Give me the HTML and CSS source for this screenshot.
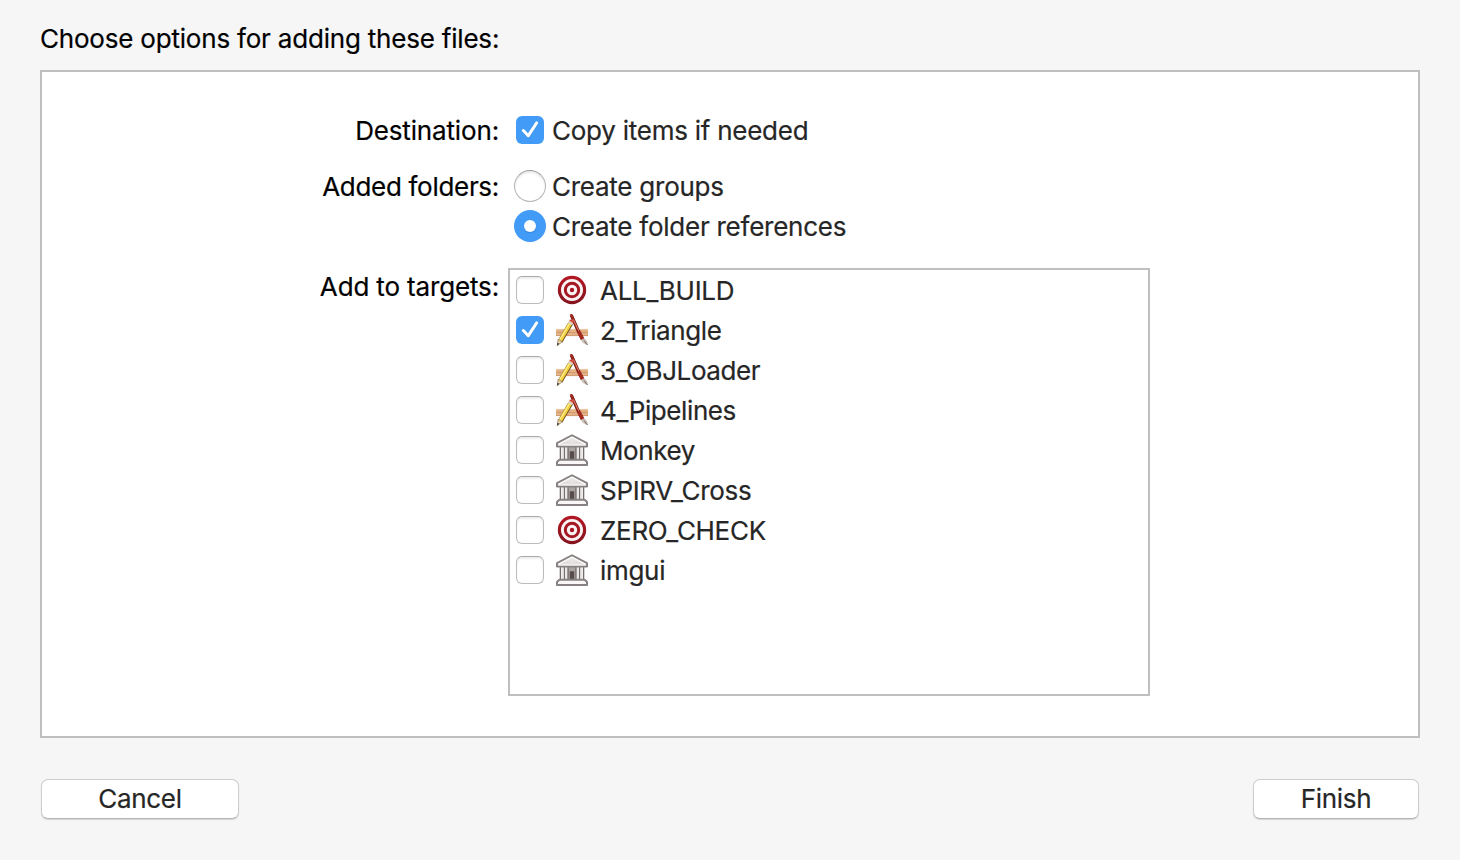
FILE: index.html
```html
<!DOCTYPE html>
<html lang="en">
<head>
<meta charset="utf-8">
<title>Add Files</title>
<link rel="stylesheet" href="styles.css">
</head>
<body>
<svg class="defs" width="0" height="0" aria-hidden="true">
  <defs>
    <linearGradient id="red" x1="0" y1="0" x2="0" y2="1"><stop offset="0" stop-color="#b31824"/><stop offset="1" stop-color="#84131d"/></linearGradient>
    <linearGradient id="stone" x1="0" y1="0" x2="0" y2="1"><stop offset="0" stop-color="#f0eded"/><stop offset="1" stop-color="#dcd8d8"/></linearGradient>
    <symbol id="check" viewBox="0 0 28 28">
      <path d="M7.3 15.3 12.2 20.6 20.7 7.6" fill="none" stroke="#2674c4" stroke-opacity=".45" stroke-width="3" stroke-linecap="round" stroke-linejoin="round"/>
      <path d="M7.3 14.5 12.2 19.8 20.7 6.9" fill="none" stroke="#fff" stroke-width="3" stroke-linecap="round" stroke-linejoin="round"/>
    </symbol>
    <symbol id="bullseye" viewBox="0 0 32 32">
      <circle cx="16" cy="16" r="14.2" fill="url(#red)"/>
      <circle cx="16" cy="16" r="11" fill="#fbf3f3"/>
      <circle cx="16" cy="16" r="8.2" fill="#a31822"/>
      <circle cx="16" cy="16" r="5.2" fill="#fbf3f3"/>
      <circle cx="16" cy="16" r="2.2" fill="#a31822"/>
    </symbol>
    <symbol id="app" viewBox="0 0 32 32">
      <path d="M0 15h32v7H0z" fill="#e3b287"/>
      <path d="M0 15.4h32" stroke="#edc59f"/>
      <path d="M0 18.5h32M0 21.6h32" stroke="#cf9769" stroke-width=".8"/>
      <path d="M15.3 1.2 22 16.5 26.5 25.5" fill="none" stroke="#6d1514" stroke-width="3.2"/>
      <path d="M14.8 0 21.8 16" stroke="#a52b22" stroke-width="2"/>
      <path d="M17.4 5.5 23 17.5" stroke="#e88c79" stroke-width=".9"/>
      <path d="m20.9 18 3.3-1.6 4.2 8.2-3.2 1.7z" fill="#a32b23"/>
      <path d="m24.9 26 3.4-1.7c2.4 2 3.5 4 3.7 6.7-3.2-.5-5.7-2-7.1-5z" fill="#cec3bd"/>
      <path d="M28 26.5 31.5 31" stroke="#776a65"/>
      <path d="M15.5 8 4.2 27.2" stroke="#6f5122" stroke-width="5"/>
      <path d="M15.2 7.8 4.1 26.8" stroke="#f5cf43" stroke-width="3.7"/>
      <path d="M14.5 7.6 3.5 26.2" stroke="#fff08a" stroke-width="1.2"/>
      <path d="m13.2 6.9 4 2.3-1.2 2-4-2.4z" fill="#d8d6d3"/>
      <path d="M13.7 5.8q2.6-1.3 4.1 1.8l-.6 1.5-3.9-2.3z" fill="#d84e43"/>
      <path d="m2 25.2 4.3 2.5-5 4z" fill="#ead3aa" stroke="#786246" stroke-width=".6"/>
      <path d="m1.5 28.7 1.8 1.1-2.3 2z" fill="#333"/>
    </symbol>
    <symbol id="library" viewBox="0 0 32 32">
      <path d="M3.8 12.5h24.4V26H3.8z" fill="#fff"/>
      <path d="M12 12h8v14h-8z" fill="#aaa3a3"/>
      <path d="M13.8 17.3h4.4V26h-4.4z" fill="#564c4c"/>
      <path d="M4.4 12v14M8.4 12v14M12 12v14M20 12v14M23.6 12v14M27.6 12v14" stroke="#756c6c" stroke-width="1.4"/>
      <path d="M6.4 13v13M10.2 13v13M21.8 13v13M25.6 13v13" stroke="#e9e6e6" stroke-width="1.7"/>
      <path d="M16 1.3 31 9.2v3.4H1V9.2z" fill="url(#stone)" stroke="#888181" stroke-width="2" stroke-linejoin="round"/>
      <path d="M16 3 29.5 10.2M16 3 2.5 10.2M2.5 11h27" fill="none" stroke="#fff" stroke-width="1.2"/>
      <path d="M3.3 25.7h25.4L31 28v3H1v-3z" fill="#faf8f8" stroke="#888181" stroke-width="2" stroke-linejoin="round"/>
    </symbol>
  </defs>
</svg>
<main class="dialog">
  <h1 class="title">Choose options for adding these files:</h1>
  <section class="panel">
    <div class="row destination">
      <div class="label wide">Destination:</div>
      <div class="option"><span class="box on"><svg><use href="#check"/></svg></span><span class="text">Copy items if needed</span></div>
    </div>
    <div class="row folders">
      <div class="label">Added folders:</div>
      <div class="choices">
        <div class="option"><span class="radio"></span><span class="text">Create groups</span></div>
        <div class="option"><span class="radio on"></span><span class="text">Create folder references</span></div>
      </div>
    </div>
    <div class="row targets">
      <div class="label wide">Add to targets:</div>
      <div class="list">
        <div class="target"><span class="box"></span><svg class="icon"><use href="#bullseye"/></svg><span class="text">ALL_BUILD</span></div>
        <div class="target"><span class="box on"><svg><use href="#check"/></svg></span><svg class="icon"><use href="#app"/></svg><span class="text tight">2_Triangle</span></div>
        <div class="target"><span class="box"></span><svg class="icon"><use href="#app"/></svg><span class="text tight">3_OBJLoader</span></div>
        <div class="target"><span class="box"></span><svg class="icon"><use href="#app"/></svg><span class="text tight">4_Pipelines</span></div>
        <div class="target"><span class="box"></span><svg class="icon"><use href="#library"/></svg><span class="text tight">Monkey</span></div>
        <div class="target"><span class="box"></span><svg class="icon"><use href="#library"/></svg><span class="text">SPIRV_Cross</span></div>
        <div class="target"><span class="box"></span><svg class="icon"><use href="#bullseye"/></svg><span class="text">ZERO_CHECK</span></div>
        <div class="target"><span class="box"></span><svg class="icon"><use href="#library"/></svg><span class="text">imgui</span></div>
      </div>
    </div>
  </section>
  <footer class="actions">
    <button class="button cancel">Cancel</button>
    <button class="button finish">Finish</button>
  </footer>
</main>
</body>
</html>
```

FILE: styles.css
```css
* { box-sizing: border-box; }
body {
  margin: 0;
  background: #f6f6f6;
  color: #262626;
  font: 26px/40px Inter, sans-serif;
  letter-spacing: -0.25px;
  white-space: nowrap;
  -webkit-text-stroke: 0.2px;
}
.defs { position: absolute; }
.dialog { width: 1460px; height: 860px; padding: 19px 40px 0; }
.title { margin: 0 0 11px; height: 40px; font: inherit; letter-spacing: -0.2px; color: #000; }
.panel {
  height: 668px;
  padding-top: 38px;
  background: #fff;
  border: 2px solid #bfbfbf;
}
.row { display: grid; grid-template-columns: 457px 1fr; }
.label { padding-top: 1px; color: #000; text-align: right; letter-spacing: -0.3px; }
.label.wide { letter-spacing: -0.15px; }
.destination, .folders { column-gap: 15px; }
.destination { height: 40px; margin-bottom: 16px; }
.option { display: grid; grid-template-columns: 32px 1fr; column-gap: 6px; align-items: center; height: 40px; }
.text { padding-top: 2px; line-height: 38px; }
.text.tight { letter-spacing: -0.4px; }
.box {
  display: block;
  width: 28px;
  height: 28px;
  border: 1px solid #bcbcbc;
  border-top-color: #a9a9a9;
  border-radius: 6px;
  background: #fff;
  box-shadow: inset 0 2px 2px #eee;
}
.option .box { justify-self: center; }
.box.on { border: 0; background: #429bf7; box-shadow: none; }
.box svg { display: block; width: 28px; height: 28px; }
.radio {
  width: 32px;
  height: 32px;
  border: 1px solid #b5b5b5;
  border-top-color: #999;
  border-radius: 50%;
  box-shadow: inset 0 2px 2px #e9e9e9;
}
.radio.on {
  display: grid;
  place-items: center;
  border: 0;
  background: #429bf7;
  box-shadow: none;
}
.radio.on::before {
  content: "";
  width: 12px;
  height: 12px;
  border-radius: 50%;
  background: #fff;
  box-shadow: 0 1px 1px #2674c480;
}
.targets { margin-top: 22px; column-gap: 9px; }
.targets .label { padding: 0; line-height: 38px; }
.list { width: 642px; height: 428px; border: 2px solid #bfbfbf; padding-left: 6px; }
.target { display: flex; align-items: center; height: 40px; letter-spacing: -0.3px; }
.icon { width: 32px; height: 32px; margin: 0 12px; }
.actions { display: flex; justify-content: space-between; margin-top: 41px; padding: 0 1px; }
.button {
  height: 40px;
  padding: 0;
  border: 1px solid #cdcdcd;
  border-bottom-color: #b5b5b5;
  border-radius: 7px;
  background: #fff;
  color: #262626;
  font: inherit;
  line-height: 38px;
  letter-spacing: -0.3px;
  box-shadow: 0 1px 1px #d5d5d5;
}
.cancel { width: 198px; }
.finish { width: 166px; }
```
